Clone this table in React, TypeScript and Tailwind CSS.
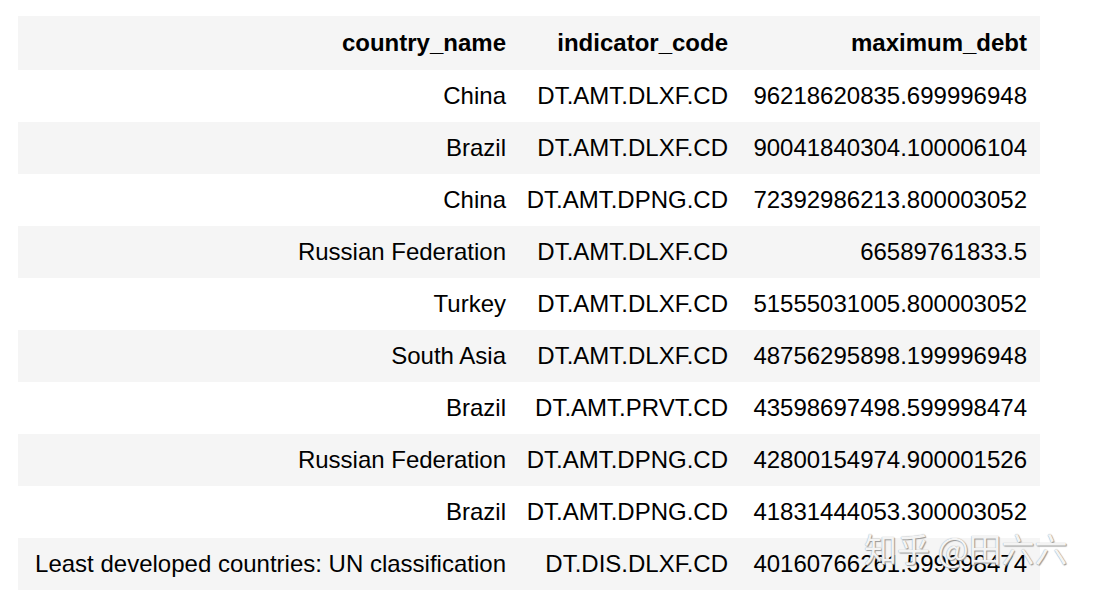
const rows: [string, string, string][] = [
  ["China", "DT.AMT.DLXF.CD", "96218620835.699996948"],
  ["Brazil", "DT.AMT.DLXF.CD", "90041840304.100006104"],
  ["China", "DT.AMT.DPNG.CD", "72392986213.800003052"],
  ["Russian Federation", "DT.AMT.DLXF.CD", "66589761833.5"],
  ["Turkey", "DT.AMT.DLXF.CD", "51555031005.800003052"],
  ["South Asia", "DT.AMT.DLXF.CD", "48756295898.199996948"],
  ["Brazil", "DT.AMT.PRVT.CD", "43598697498.599998474"],
  ["Russian Federation", "DT.AMT.DPNG.CD", "42800154974.900001526"],
  ["Brazil", "DT.AMT.DPNG.CD", "41831444053.300003052"],
  ["Least developed countries: UN classification", "DT.DIS.DLXF.CD", "40160766261.599998474"],
];

const cell = "pl-[4px] pr-[13px] text-right whitespace-nowrap";

export default function App() {
  return (
    <div className="relative h-[596px] w-[1098px] overflow-hidden bg-white font-['Liberation_Sans',Arial,sans-serif] text-[24px] text-black">
      <div className="pl-[18px] pt-[16px]">
        <table className="w-[1022px] table-fixed border-collapse">
          <colgroup>
            <col className="w-[501px]" />
            <col className="w-[222px]" />
            <col className="w-[299px]" />
          </colgroup>
          <thead>
            <tr className="h-[54px] bg-[#f5f5f5] font-bold">
              <th className={cell}>country_name</th>
              <th className={cell}>indicator_code</th>
              <th className={cell}>maximum_debt</th>
            </tr>
          </thead>
          <tbody>
            {rows.map((r, i) => (
              <tr key={i} className={i % 2 === 1 ? "h-[52px] bg-[#f5f5f5]" : "h-[52px] bg-white"}>
                <td className={cell}>{r[0]}</td>
                <td className={cell}>{r[1]}</td>
                <td className={cell}>{r[2]}</td>
              </tr>
            ))}
          </tbody>
        </table>
      </div>

      {/* site watermark */}
      <div className="absolute left-[864px] top-[532px] whitespace-nowrap font-['Noto_Sans_CJK_SC','Liberation_Sans',sans-serif] text-[33px] leading-none text-white/90 [text-shadow:0_0_1px_#8a8a8a,1px_1px_1px_#9a9a9a]">
        知乎 @田六六
      </div>
    </div>
  );
}
